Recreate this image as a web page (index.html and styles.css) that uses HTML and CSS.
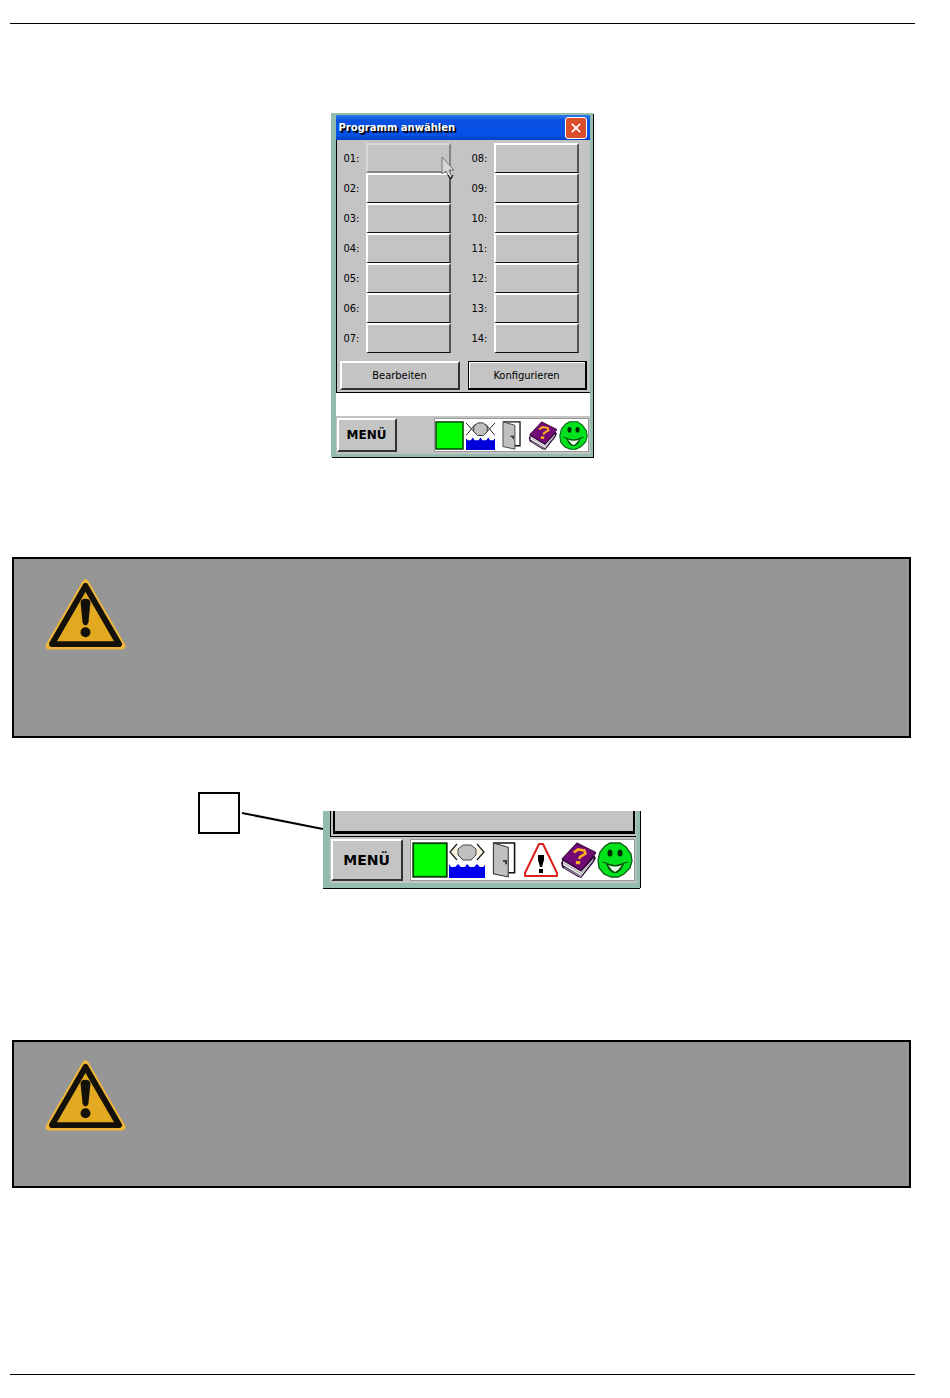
FILE: index.html
```html
<!DOCTYPE html>
<html lang="de">
<head>
  <meta charset="utf-8">
  <meta name="viewport" content="width=device-width, initial-scale=1">
  <title>Programm anwählen</title>
  <link rel="stylesheet" href="styles.css">
</head>
<body>

<!-- shared icons -->
<svg class="sprite" aria-hidden="true">
  <symbol id="icon-run" viewBox="0 0 30 30">
    <rect x="1" y="1" width="28" height="28" fill="#00ff00" stroke="#003800" stroke-width="1.5"/>
  </symbol>
  <symbol id="icon-eye" viewBox="0 0 30 30">
    <path d="M0 2 10 13M0 15 10 3M30 2 20 13M30 15 20 3" stroke="#222" stroke-width="1" fill="none"/>
    <path d="M12 2h6l4 4v5l-4 4h-6l-4-4V6z" fill="#c0c0c0" stroke="#333"/>
    <path d="M0 30V18l2 2h3l2-3 2 3h4l2-3 2 3h4l2-3 2 3h3l2-2v12z" fill="#0000dd"/>
  </symbol>
  <symbol id="icon-eye-open" viewBox="0 0 36 36">
    <path d="M8 2 1 10 8 18M28 2 35 10 28 18" stroke="#222" stroke-width="1.3" fill="#fbf3e0"/>
    <path d="M14 3h8l5 4v6l-5 5h-8l-5-5V7z" fill="#c0c0c0" stroke="#444"/>
    <path d="M0 36V22l2 3h4l3-3 3 3h4l2-3 3 3h4l3-3 3 3h3l2-2v13z" fill="#0000ee"/>
  </symbol>
  <symbol id="icon-door" viewBox="0 0 22 34">
    <path d="M1 1h20v28h-6" fill="#fff" stroke="#111" stroke-width="1.5"/>
    <path d="M1 1 15 5v28L1 30z" fill="#c0c0c0" stroke="#333"/>
    <path d="M10 18h3v3" fill="none" stroke="#222" stroke-width="1.5"/>
  </symbol>
  <symbol id="icon-alert" viewBox="0 0 36 36">
    <path d="M16 2h4L34 31v3H2v-3z" fill="#fff" stroke="#d8201c" stroke-width="2" stroke-linejoin="round"/>
    <path d="M15 13h6v5l-2 7h-2l-2-7z" fill="#000"/>
    <rect x="16" y="27" width="4" height="4" fill="#000"/>
  </symbol>
  <symbol id="icon-book" viewBox="0 0 34 34">
    <path d="M1 20 3 15 20 26 32 12 34 15 32 19 20 34 17 33 2 24z" fill="#2c0638"/>
    <path d="M3 18 20 28 32 15 31 18 20 32 3 22z" fill="#f2f2f2"/>
    <path d="M4 24 20 33M4 20 20 30 31 17" stroke="#aaa" fill="none"/>
    <path d="M16 1 34 10 20 27 2 16z" fill="#720a76" stroke="#38053c"/>
    <path d="M13 10 17 7 23 8 24 11 19 14 18 16" fill="none" stroke="#ffae21" stroke-width="2.4"/>
    <rect x="15" y="18" width="4" height="3" fill="#ffae21"/>
  </symbol>
  <symbol id="icon-smiley" viewBox="0 0 36 36">
    <path d="M13 1h10l6 4 5 7 1 7-2 7-6 6-6 3h-7l-7-3-5-6-1-8 2-8 5-6z" fill="#00e21c" stroke="#0c5a13" stroke-width="1.3"/>
    <ellipse cx="13" cy="11" rx="2.5" ry="3.5" fill="#032a05"/>
    <ellipse cx="23" cy="11" rx="2.5" ry="3.5" fill="#032a05"/>
    <path d="M8 20q10 6 20 0l-4 8-4 3h-4l-4-3z" fill="#064d0a"/>
    <path d="M11 23q7 3 14 0l-4 5-3 2-3-2z" fill="#eaffea"/>
    <path d="M5 20l4 1M27 21l4-1" stroke="#064d0a"/>
  </symbol>
  <symbol id="icon-warning" viewBox="0 0 82 72">
    <path d="M41 4 78 68H4z" fill="#e7ae24" stroke="#efb63a" stroke-width="7" stroke-linejoin="round"/>
    <path d="M41 7 75 66H7z" fill="#e3a920" stroke="#14100a" stroke-width="6" stroke-linejoin="round"/>
    <path d="M36 24q0-4 5-4t5 4l-2 20q-1 3-3 3t-3-3z" fill="#14100a"/>
    <circle cx="41" cy="54" r="5" fill="#14100a"/>
  </symbol>
</svg>

<div class="page">
  <hr class="rule">

  <main class="content">
    <section class="window">
      <header class="titlebar">
        <h1>Programm anwählen</h1>
        <button class="close" type="button" aria-label="Schließen">
          <svg viewBox="0 0 12 12"><path d="M1 1 11 11M11 1 1 11" stroke="#fff" stroke-width="2"/></svg>
        </button>
      </header>

      <div class="dialog">
        <div class="programs">
          <div class="column">
            <div class="program">
              <label for="p01">01:</label><button id="p01" class="slot slot-off" type="button"></button>
              <svg class="cursor" viewBox="0 0 15 24"><path d="M2 1v17l4-3 3 7 3-1-3-7h5z" fill="#d6d6d6" stroke="#777"/><path d="M8 19l3 4 2-4" fill="none" stroke="#000"/></svg>
            </div>
            <div class="program"><label for="p02">02:</label><button id="p02" class="slot" type="button"></button></div>
            <div class="program"><label for="p03">03:</label><button id="p03" class="slot" type="button"></button></div>
            <div class="program"><label for="p04">04:</label><button id="p04" class="slot" type="button"></button></div>
            <div class="program"><label for="p05">05:</label><button id="p05" class="slot" type="button"></button></div>
            <div class="program"><label for="p06">06:</label><button id="p06" class="slot" type="button"></button></div>
            <div class="program"><label for="p07">07:</label><button id="p07" class="slot" type="button"></button></div>
          </div>
          <div class="column">
            <div class="program"><label for="p08">08:</label><button id="p08" class="slot" type="button"></button></div>
            <div class="program"><label for="p09">09:</label><button id="p09" class="slot" type="button"></button></div>
            <div class="program"><label for="p10">10:</label><button id="p10" class="slot" type="button"></button></div>
            <div class="program"><label for="p11">11:</label><button id="p11" class="slot" type="button"></button></div>
            <div class="program"><label for="p12">12:</label><button id="p12" class="slot" type="button"></button></div>
            <div class="program"><label for="p13">13:</label><button id="p13" class="slot" type="button"></button></div>
            <div class="program"><label for="p14">14:</label><button id="p14" class="slot" type="button"></button></div>
          </div>
        </div>
        <div class="actions">
          <button class="action" type="button">Bearbeiten</button>
          <button class="action action-default" type="button">Konfigurieren</button>
        </div>
      </div>

      <footer class="taskbar">
        <button class="menu" type="button">MENÜ</button>
        <div class="tray">
          <svg class="icon"><use href="#icon-run"/></svg>
          <svg class="icon"><use href="#icon-eye"/></svg>
          <svg class="icon"><use href="#icon-door"/></svg>
          <svg class="icon"><use href="#icon-book"/></svg>
          <svg class="icon"><use href="#icon-smiley"/></svg>
        </div>
      </footer>
    </section>

    <section class="notice">
      <svg class="warning"><use href="#icon-warning"/></svg>
    </section>

    <section class="detail">
      <div class="callout"></div>
      <svg class="leader" viewBox="0 0 83 20"><path d="M2 1 83 17" stroke="#000" stroke-width="2"/></svg>
      <div class="panel">
        <div class="panel-edge"><div class="panel-button"></div></div>
        <div class="taskbar taskbar-large">
          <button class="menu" type="button">MENÜ</button>
          <div class="tray">
            <svg class="icon"><use href="#icon-run"/></svg>
            <svg class="icon"><use href="#icon-eye-open"/></svg>
            <svg class="icon"><use href="#icon-door"/></svg>
            <svg class="icon"><use href="#icon-alert"/></svg>
            <svg class="icon"><use href="#icon-book"/></svg>
            <svg class="icon"><use href="#icon-smiley"/></svg>
          </div>
        </div>
      </div>
    </section>

    <section class="notice notice-short">
      <svg class="warning"><use href="#icon-warning"/></svg>
    </section>
  </main>

  <hr class="rule">
</div>

</body>
</html>
```
FILE: styles.css
```css
* {
  box-sizing: border-box;
}

body {
  margin: 0;
  background: #fff;
  color: #000;
  font-family: "DejaVu Sans Condensed", "DejaVu Sans", sans-serif;
  font-size: 11px;
}

button {
  margin: 0;
  padding: 0;
  font: inherit;
  color: inherit;
  background: #c4c4c4;
  border-radius: 0;
}

svg {
  display: block;
}

.sprite {
  position: absolute;
  width: 0;
  height: 0;
}

.page {
  padding: 23px 35px 23px 10px;
}

.rule {
  height: 1px;
  margin: 0;
  border: 0;
  background: #000;
}

.content {
  padding: 89px 4px 186px 2px;
}

/* program window */
.window {
  width: 262px;
  margin: 0 auto 100px;
  border: solid #94bdb0;
  border-width: 2px 3px 3px 5px;
  box-shadow: 1px 1px #000;
  background: #fff;
}

.titlebar {
  display: flex;
  align-items: center;
  justify-content: space-between;
  height: 25px;
  padding: 0 3px;
  background: linear-gradient(#2f7df0, #0a50e0 20%, #0552ea 80%, #0340c0);
}

.titlebar h1 {
  margin: 0;
  color: #fff;
  font-family: "DejaVu Sans", sans-serif;
  font-size: 10px;
  font-weight: bold;
  text-shadow: 1px 1px #000820, 2px 2px #000820;
}

.close {
  display: flex;
  align-items: center;
  justify-content: center;
  width: 22px;
  height: 22px;
  border: 1px solid #fff;
  border-radius: 3px;
  background: #db4e2c;
}

.close svg {
  width: 10px;
  height: 10px;
}

.dialog {
  padding: 3px 3px 2px;
  border-left: 1px solid #000;
  border-bottom: 1px solid #000;
  background: #c4c4c4;
}

.programs {
  display: flex;
  gap: 21px;
  padding-left: 4px;
}

.program {
  position: relative;
  display: flex;
  align-items: center;
  justify-content: space-between;
  width: 107px;
  height: 30px;
}

.slot {
  width: 85px;
  height: 30px;
  border: solid;
  border-width: 2px 2px 1px;
  border-color: #fff #555 #111 #fff;
}

.slot-off {
  border-width: 2px;
  border-color: #d8d8d8 #858585 #858585 #d8d8d8;
}

.cursor {
  position: absolute;
  z-index: 1;
  right: -4px;
  top: 13px;
  width: 15px;
  height: 24px;
}

.actions {
  display: flex;
  gap: 8px;
  margin-top: 8px;
}

.action {
  flex: 1;
  height: 29px;
  border: 2px solid;
  border-color: #fff #333 #333 #fff;
}

.action-default {
  border-width: 1px 2px 2px 1px;
  border-color: #000;
  box-shadow: inset 1px 1px #fff;
}

.taskbar {
  display: flex;
  align-items: center;
  justify-content: space-between;
  height: 38px;
  margin-top: 23px;
  padding: 0 1px;
  background: #c4c4c4;
}

.menu {
  width: 60px;
  height: 34px;
  border: 2px solid;
  border-color: #fff #333 #333 #fff;
  font-family: "DejaVu Sans", sans-serif;
  font-size: 12px;
  font-weight: bold;
}

.tray {
  display: flex;
  align-items: center;
  gap: 2px;
  height: 34px;
  border: 1px solid #999;
  background: #fff;
}

.icon {
  width: 29px;
  height: 29px;
}

/* warning boxes */
.notice {
  min-height: 181px;
  padding: 20px 31px;
  border: 2px solid #000;
  background: #969696;
}

.notice-short {
  min-height: 148px;
  padding-top: 18px;
}

.warning {
  width: 81px;
  height: 71px;
}

/* enlarged status bar with callout */
.detail {
  display: flex;
  align-items: flex-start;
  justify-content: center;
  padding: 54px 86px 152px 0;
}

.callout {
  width: 42px;
  height: 42px;
  border: 2px solid #000;
}

.leader {
  width: 83px;
  height: 20px;
  margin-top: 20px;
}

.panel {
  width: 317px;
  margin-top: 19px;
  border: solid #94bdb0;
  border-width: 0 4px 5px 7px;
  box-shadow: 0 1px #000, 1px 0 #000;
}

.panel-edge {
  height: 26px;
  padding: 0 1px 2px 2px;
  border: solid #000;
  border-width: 0 0 1px 1px;
  background: #c4c4c4;
}

.panel-button {
  height: 23px;
  border: solid #000;
  border-width: 0 2px 3px;
}

.taskbar-large {
  height: 46px;
  margin-top: 0;
}

.taskbar-large .menu {
  width: 72px;
  height: 42px;
  font-size: 14px;
}

.taskbar-large .tray {
  gap: 1px;
  height: 42px;
  padding: 0 1px;
}

.taskbar-large .icon {
  width: 36px;
  height: 36px;
}
```
